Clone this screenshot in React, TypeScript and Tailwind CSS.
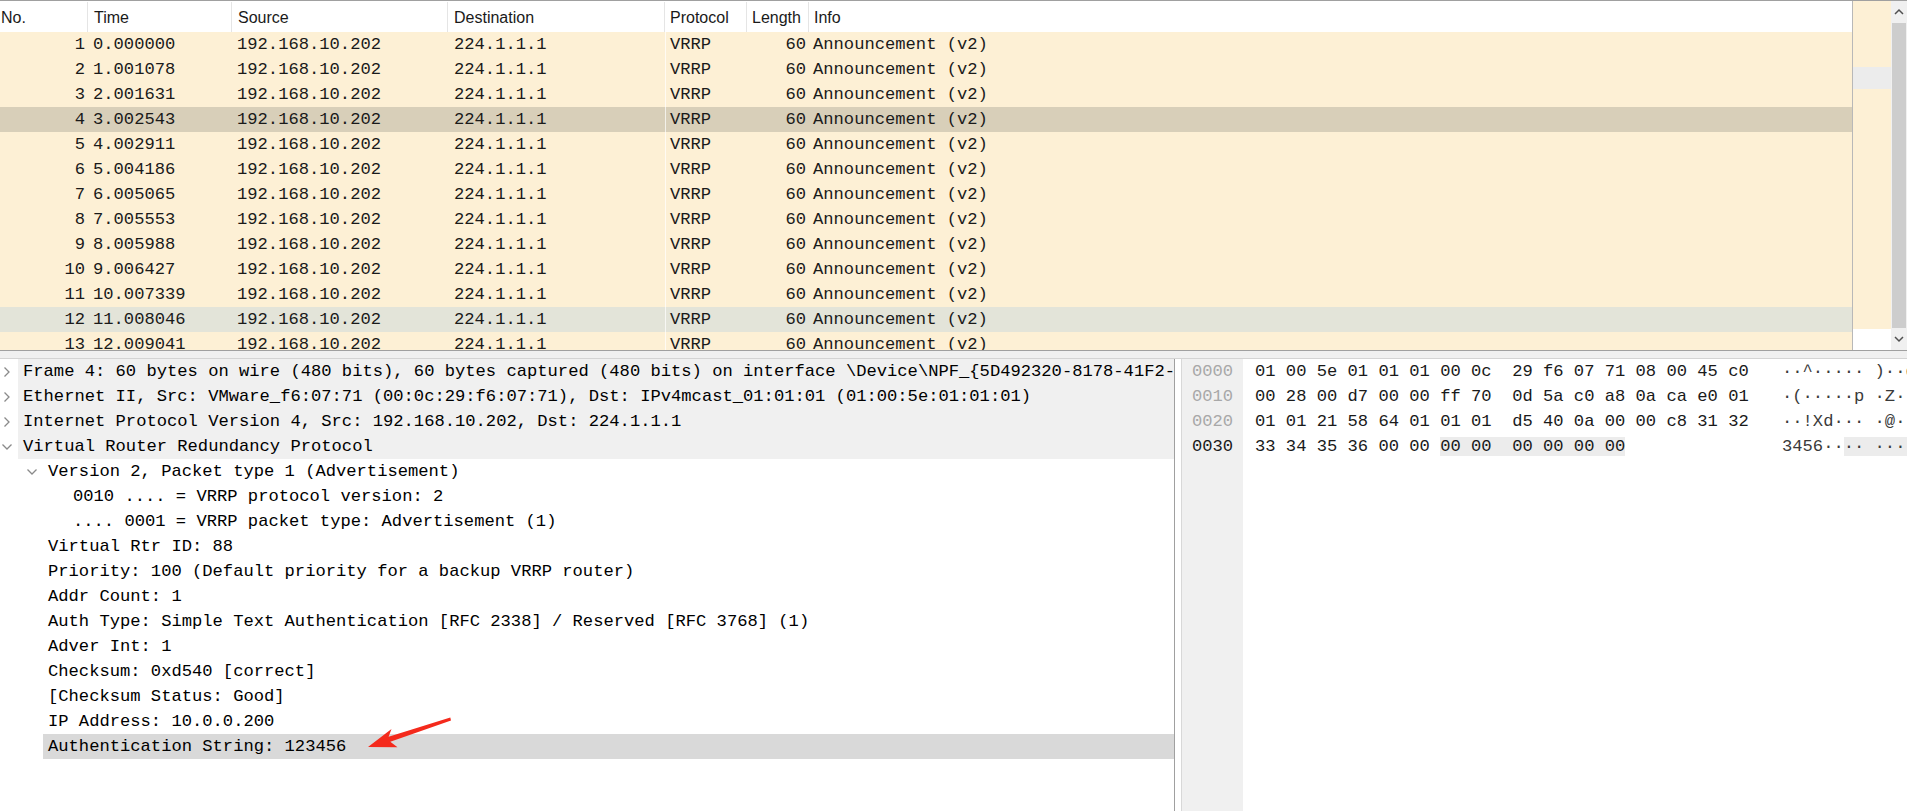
import React from "react";

const times = [
    "0.000000", "1.001078", "2.001631", "3.002543", "4.002911", "5.004186", "6.005065",
    "7.005553", "8.005988", "9.006427", "10.007339", "11.008046", "12.009041",
];

type Detail = { level: number; chev?: "right" | "down"; text: string; top?: boolean; sel?: boolean };

const details: Detail[] = [
    { level: 0, chev: "right", top: true, text: "Frame 4: 60 bytes on wire (480 bits), 60 bytes captured (480 bits) on interface \\Device\\NPF_{5D492320-8178-41F2-9C4A-1B2E3F405060}, id 0" },
    { level: 0, chev: "right", top: true, text: "Ethernet II, Src: VMware_f6:07:71 (00:0c:29:f6:07:71), Dst: IPv4mcast_01:01:01 (01:00:5e:01:01:01)" },
    { level: 0, chev: "right", top: true, text: "Internet Protocol Version 4, Src: 192.168.10.202, Dst: 224.1.1.1" },
    { level: 0, chev: "down", top: true, text: "Virtual Router Redundancy Protocol" },
    { level: 1, chev: "down", text: "Version 2, Packet type 1 (Advertisement)" },
    { level: 2, text: "0010 .... = VRRP protocol version: 2" },
    { level: 2, text: ".... 0001 = VRRP packet type: Advertisement (1)" },
    { level: 1, text: "Virtual Rtr ID: 88" },
    { level: 1, text: "Priority: 100 (Default priority for a backup VRRP router)" },
    { level: 1, text: "Addr Count: 1" },
    { level: 1, text: "Auth Type: Simple Text Authentication [RFC 2338] / Reserved [RFC 3768] (1)" },
    { level: 1, text: "Adver Int: 1" },
    { level: 1, text: "Checksum: 0xd540 [correct]" },
    { level: 1, text: "[Checksum Status: Good]" },
    { level: 1, text: "IP Address: 10.0.0.200" },
    { level: 1, text: "Authentication String: 123456", sel: true },
];

const hexRows = [
    { off: "0000", hex: "01 00 5e 01 01 01 00 0c  29 f6 07 71 08 00 45 c0", ascii: "··^····· )··q··E·" },
    { off: "0010", hex: "00 28 00 d7 00 00 ff 70  0d 5a c0 a8 0a ca e0 01", ascii: "·(·····p ·Z······" },
    { off: "0020", hex: "01 01 21 58 64 01 01 01  d5 40 0a 00 00 c8 31 32", ascii: "··!Xd··· ·@····12" },
];

function Chevron({ dir }: { dir: "right" | "down" }) {
    return dir === "right" ? (
        <svg width="10" height="12" viewBox="0 0 10 12" className="ml-[2px]">
            <path d="M2.5 1.5 L7 6 L2.5 10.5" fill="none" stroke="#8a8a8a" strokeWidth="1.3" />
        </svg>
    ) : (
        <svg width="12" height="10" viewBox="0 0 12 10" className="ml-[1px]">
            <path d="M1.5 2.5 L6 7 L10.5 2.5" fill="none" stroke="#8a8a8a" strokeWidth="1.3" />
        </svg>
    );
}

function PacketRow({ i, time }: { i: number; time: string }) {
    const bg = i === 4 ? "bg-[#d8cfb9]" : i === 12 ? "bg-[#e3e4d9]" : "bg-[#fdf0d5]";
    return (
        <div className={`flex h-[25px] flex-shrink-0 items-center ${bg}`}>
            <div className="w-[88px] pr-[3px] text-right">{i}</div>
            <div className="w-[144px] pl-[5px]">{time}</div>
            <div className="w-[216px] pl-[5px]">192.168.10.202</div>
            <div className="w-[217px] pl-[6px]">224.1.1.1</div>
            <div className="h-full w-[82px] border-l border-white/70 pl-[4px] leading-[25px]">VRRP</div>
            <div className="w-[62px] pr-[3px] text-right">60</div>
            <div className="flex-1 pl-[4px]">Announcement (v2)</div>
        </div>
    );
}

export default function App() {
    return (
        <div className="relative flex h-[811px] w-[1907px] flex-col overflow-hidden bg-white font-['Liberation_Mono','DejaVu_Sans_Mono',monospace] text-[17.15px] text-[#1a1a1a]">
            {/* Packet list */}
            <div className="flex h-[351px] flex-shrink-0 border-t border-b border-[#a0a0a0]">
                <div className="flex w-[1852px] flex-col overflow-hidden">
                    <div className="flex h-[31px] flex-shrink-0 items-center bg-white pt-[1px] font-['Liberation_Sans',sans-serif] text-[16px] text-[#1a1a1a]">
                        <div className="h-full w-[88px] border-r border-[#e5e5e5] pl-[1px] leading-[31px]">No.</div>
                        <div className="h-full w-[144px] border-r border-[#e5e5e5] pl-[6px] leading-[31px]">Time</div>
                        <div className="h-full w-[216px] border-r border-[#e5e5e5] pl-[6px] leading-[31px]">Source</div>
                        <div className="h-full w-[217px] border-r border-[#e5e5e5] pl-[6px] leading-[31px]">Destination</div>
                        <div className="h-full w-[82px] border-r border-[#e5e5e5] pl-[5px] leading-[31px]">Protocol</div>
                        <div className="h-full w-[62px] border-r border-[#e5e5e5] pl-[5px] leading-[31px]">Length</div>
                        <div className="h-full flex-1 pl-[5px] leading-[31px]">Info</div>
                    </div>
                    <div className="flex flex-1 flex-col overflow-hidden">
                        {times.map((t, idx) => (
                            <PacketRow key={idx} i={idx + 1} time={t} />
                        ))}
                    </div>
                </div>
                {/* minimap */}
                <div className="flex w-[39px] flex-col border-l border-[#b8b8b8] bg-[#fdf0d5]">
                    <div className="h-[66px]" />
                    <div className="h-[22px] bg-[#ececec]" />
                    <div className="flex-1" />
                    <div className="h-[21px] bg-white" />
                </div>
                {/* scrollbar */}
                <div className="flex w-[16px] flex-col bg-[#f0f0f0]">
                    <div className="flex h-[22px] items-center justify-center">
                        <svg width="10" height="8" viewBox="0 0 10 8">
                            <path d="M1 6 L5 2 L9 6" fill="none" stroke="#505050" strokeWidth="1.5" />
                        </svg>
                    </div>
                    <div className="mx-[1px] flex-1 bg-[#cdcdcd]" />
                    <div className="flex h-[22px] items-center justify-center">
                        <svg width="10" height="8" viewBox="0 0 10 8">
                            <path d="M1 2 L5 6 L9 2" fill="none" stroke="#505050" strokeWidth="1.5" />
                        </svg>
                    </div>
                </div>
            </div>

            <div className="h-[7px] flex-shrink-0 bg-[#f0f0f0]" />

            {/* Bottom panes */}
            <div className="flex flex-1 border-t border-[#d4d4d4]">
                {/* Details */}
                <div className="w-[1175px] flex-shrink-0 overflow-hidden border-r border-[#a0a0a0] text-black">
                    {details.map((d, idx) => (
                        <div key={idx} className="flex h-[25px] items-center whitespace-pre">
                            <div className={d.level === 0 ? "w-0" : d.level === 1 ? "w-[25px]" : "w-[50px]"} />
                            <div className="flex w-[18px] flex-shrink-0 items-center">
                                {d.chev && <Chevron dir={d.chev} />}
                            </div>
                            <div
                                className={`h-full flex-1 pl-[5px] leading-[25px] ${d.top ? "bg-[#f0f0f0]" : d.sel ? "bg-[#d9d9d9]" : ""}`}
                            >
                                {d.text}
                            </div>
                        </div>
                    ))}
                </div>

                <div className="w-[6px] flex-shrink-0 bg-white" />

                {/* Hex dump */}
                <div className="flex flex-1 overflow-hidden border-l border-[#d8d8d8] whitespace-pre">
                    <div className="w-[61px] flex-shrink-0 bg-[#f0f0f0] pl-[10px]">
                        {hexRows.map((r) => (
                            <div key={r.off} className="h-[25px] leading-[25px] text-[#a8a8a8]">{r.off}</div>
                        ))}
                        <div className="h-[25px] leading-[25px] text-[#1a1a1a]">0030</div>
                    </div>
                    <div className="flex-1 pl-[12px] text-[#1a1a1a]">
                        {hexRows.map((r) => (
                            <div key={r.off} className="flex h-[25px] leading-[25px]">
                                <div className="w-[527px] flex-shrink-0">{r.hex}</div>
                                <div className="text-[#3a3a3a]">{r.ascii}</div>
                            </div>
                        ))}
                        <div className="flex h-[25px] leading-[25px]">
                            <div className="w-[527px] flex-shrink-0">
                                <span>33 34 35 36 00 00 </span>
                                <span className="bg-[#ececec]">00 00  00 00 00 00</span>
                            </div>
                            <div className="text-[#3a3a3a]">
                                <span>3456··</span>
                                <span className="bg-[#ececec]">·· ····</span>
                            </div>
                        </div>
                    </div>
                </div>
            </div>

            {/* annotation arrow */}
            <svg className="pointer-events-none absolute left-0 top-0" width="1907" height="811">
                <polygon
                    points="368,747 391.5,729 388.6,736.8 450.3,717.6 451,720.4 390.3,741.8 397.5,747.2"
                    fill="#f42a1c"
                />
            </svg>
        </div>
    );
}
